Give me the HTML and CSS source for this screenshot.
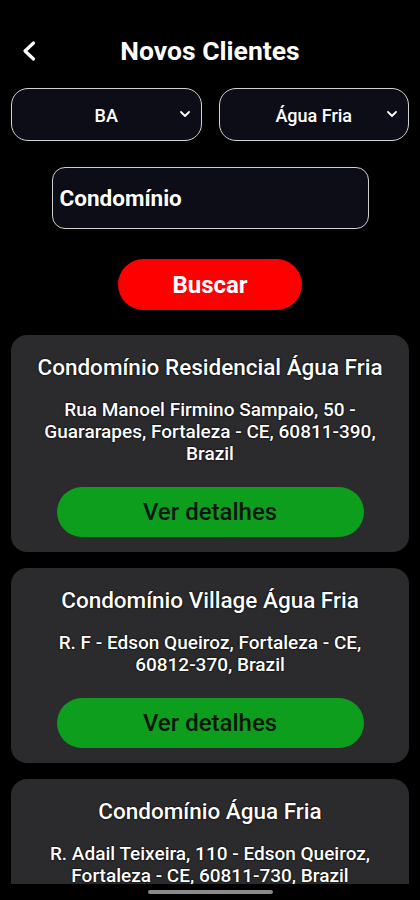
FILE: index.html
```html
<!DOCTYPE html>
<html lang="pt-BR">
<head>
<meta charset="utf-8">
<title>Novos Clientes</title>
<link rel="stylesheet" href="styles.css">
</head>
<body>
<div class="screen">
  <header class="header">
    <div class="back">
      <svg width="16" height="22" viewBox="0 0 16 22"><path d="M12.5 3 L4 11 L12.5 19" fill="none" stroke="#fff" stroke-width="3.2" stroke-linecap="round" stroke-linejoin="round"/></svg>
    </div>
    <h1 class="title">Novos Clientes</h1>
    <div></div>
  </header>

  <div class="filters">
    <div class="select">
      <span>BA</span>
      <svg class="chev" width="10" height="6" viewBox="0 0 10 6"><path d="M1 1 L5 5 L9 1" fill="none" stroke="#fff" stroke-width="1.8" stroke-linecap="round" stroke-linejoin="round"/></svg>
    </div>
    <div class="select">
      <span>Água Fria</span>
      <svg class="chev" width="10" height="6" viewBox="0 0 10 6"><path d="M1 1 L5 5 L9 1" fill="none" stroke="#fff" stroke-width="1.8" stroke-linecap="round" stroke-linejoin="round"/></svg>
    </div>
  </div>

  <div class="search">Condomínio</div>

  <div class="buscar">Buscar</div>

  <div class="list">
    <div class="card">
      <div class="card-title">Condomínio Residencial Água Fria</div>
      <div class="card-addr">Rua Manoel Firmino Sampaio, 50 -<br>Guararapes, Fortaleza - CE, 60811-390,<br>Brazil</div>
      <div class="ver">Ver detalhes</div>
    </div>
    <div class="card">
      <div class="card-title">Condomínio Village Água Fria</div>
      <div class="card-addr">R. F - Edson Queiroz, Fortaleza - CE,<br>60812-370, Brazil</div>
      <div class="ver">Ver detalhes</div>
    </div>
    <div class="card">
      <div class="card-title">Condomínio Água Fria</div>
      <div class="card-addr">R. Adail Teixeira, 110 - Edson Queiroz,<br>Fortaleza - CE, 60811-730, Brazil</div>
      <div class="ver">Ver detalhes</div>
    </div>
  </div>
</div>
<div class="navbar"><div class="handle"></div></div>
</body>
</html>
```
FILE: styles.css
```css
* { box-sizing: border-box; }
html, body { margin: 0; padding: 0; background: #000; }
body {
  width: 420px;
  height: 900px;
  overflow: hidden;
  font-family: Roboto, "Liberation Sans", sans-serif;
  color: #fff;
}
.screen {
  height: 884px;
  overflow: hidden;
}
.header {
  margin-top: 30px;
  height: 40px;
  display: grid;
  grid-template-columns: 1fr auto 1fr;
  align-items: center;
}
.back {
  padding-left: 21px;
  display: flex;
  align-items: center;
  padding-top: 2px;
}
.title {
  margin: 0;
  font-size: 26.5px;
  font-weight: 700;
  text-shadow: 0 0 2px #000;
}
.filters {
  margin-top: 18px;
  padding: 0 11px;
  display: flex;
  gap: 17px;
}
.select {
  position: relative;
  flex: 1;
  height: 53px;
  border: 1.5px solid #d2d2d2;
  border-radius: 17px;
  background: #0c0d17;
  display: flex;
  align-items: center;
  justify-content: center;
  font-size: 18px;
  font-weight: 500;
  padding-top: 1px;
}
.chev {
  position: absolute;
  right: 11px;
  top: 22px;
}
.search {
  margin: 26px auto 0;
  width: 317px;
  height: 62px;
  border: 1.5px solid #cfcfcf;
  border-radius: 13px;
  background: #0c0d17;
  display: flex;
  align-items: center;
  padding-left: 7px;
  font-size: 22.5px;
  font-weight: 700;
  text-shadow: 0 0 2px #000;
}
.buscar {
  margin: 30px auto 0;
  width: 184px;
  height: 51px;
  border-radius: 26px;
  background: #ff0000;
  display: flex;
  align-items: center;
  justify-content: center;
  font-size: 24px;
  font-weight: 700;
  color: #fff;
}
.list {
  margin-top: 25px;
  padding: 0 11px;
  display: flex;
  flex-direction: column;
  gap: 16px;
}
.card {
  background: #2b2b2e;
  border-radius: 16px;
  padding: 20px 8px 15px;
  display: flex;
  flex-direction: column;
  align-items: center;
  text-align: center;
}
.card-title {
  font-size: 22.5px;
  line-height: 24px;
  font-weight: 500;
  text-shadow: 0 0 2px #000, 0 0 1px #000;
}
.card-addr {
  margin-top: 20px;
  font-size: 19px;
  line-height: 22px;
  font-weight: 500;
  text-shadow: 0 0 2px #000, 0 0 1px #000;
}
.ver {
  margin-top: 22px;
  width: 307px;
  height: 50px;
  border-radius: 25px;
  background: #0d9e1d;
  color: #0b160b;
  display: flex;
  align-items: center;
  justify-content: center;
  font-size: 24px;
  font-weight: 500;
}
.navbar {
  height: 16px;
  background: #000;
  display: flex;
  justify-content: center;
  padding-top: 6px;
}
.handle {
  width: 125px;
  height: 4px;
  border-radius: 2px;
  background: #8a8a8a;
}
```
